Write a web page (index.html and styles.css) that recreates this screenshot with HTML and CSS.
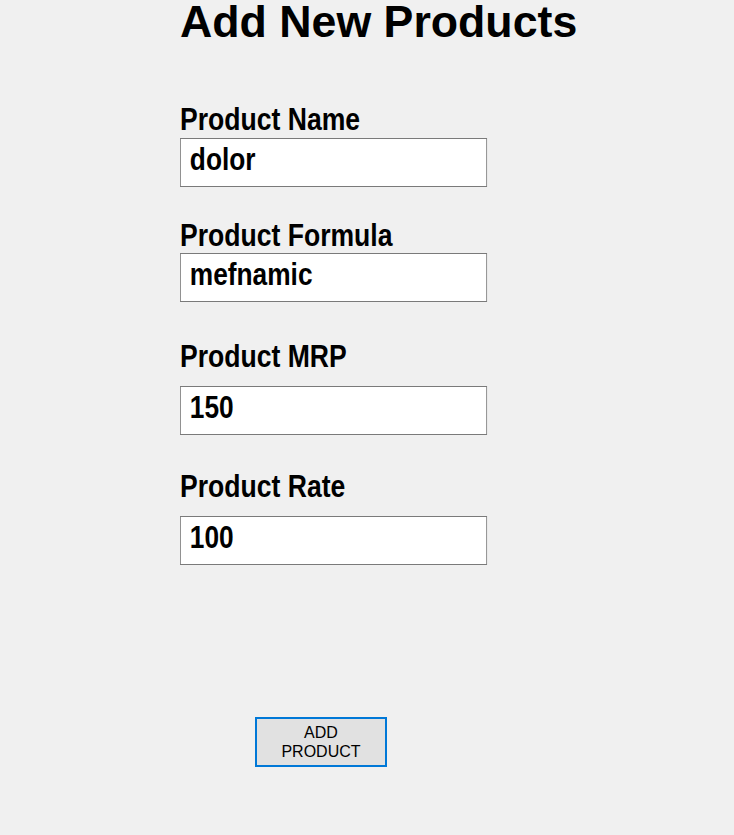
FILE: index.html
```html
<!DOCTYPE html>
<html lang="en">
<head>
<meta charset="utf-8">
<title>Add New Products</title>
<link rel="stylesheet" href="styles.css">
</head>
<body>
<main class="form-page">
  <h1 class="title">Add New Products</h1>
  <form class="product-form">
    <div class="field field-name">
      <label class="field-label" for="pname">Product Name</label>
      <input class="field-input" id="pname" type="text" value="dolor">
    </div>
    <div class="field field-formula">
      <label class="field-label" for="pformula">Product Formula</label>
      <input class="field-input" id="pformula" type="text" value="mefnamic">
    </div>
    <div class="field field-mrp">
      <label class="field-label" for="pmrp">Product MRP</label>
      <input class="field-input" id="pmrp" type="text" value="150">
    </div>
    <div class="field field-rate">
      <label class="field-label" for="prate">Product Rate</label>
      <input class="field-input" id="prate" type="text" value="100">
    </div>
    <button class="add-button" type="button">ADD<br>PRODUCT</button>
  </form>
</main>
</body>
</html>
```

FILE: styles.css
```css
html, body {
  margin: 0;
  padding: 0;
  background: #f0f0f0;
}

.form-page {
  padding-left: 180px;
  font-family: "Liberation Sans", Arial, sans-serif;
  color: #000;
}

.title {
  margin: 0;
  font-size: 44.7px;
  line-height: 44px;
  font-weight: bold;
  font-family: "Liberation Sans", Arial, sans-serif;
  white-space: nowrap;
}

.product-form {
  display: flex;
  flex-direction: column;
  align-items: flex-start;
}

.field {
  display: flex;
  flex-direction: column;
  align-items: flex-start;
}

/* Arial Narrow look: condense Liberation Sans horizontally */
.field-label {
  display: inline-block;
  font-family: "Liberation Sans", Arial, sans-serif;
  font-weight: bold;
  font-size: 32px;
  line-height: 36px;
  white-space: nowrap;
  transform: scaleX(0.83);
  transform-origin: left center;
}

.field-input {
  box-sizing: border-box;
  width: 374px;
  height: 49px;
  margin: 0;
  padding: 0 8px 7px 11px;
  border: 1px solid #7a7a7a;
  background: #fff;
  font-family: "Liberation Sans", Arial, sans-serif;
  font-weight: bold;
  font-size: 32px;
  color: #000;
  outline: none;
  transform: scaleX(0.821);
  transform-origin: left center;
}

.field-name { margin-top: 57px; }
.field-name .field-input { margin-top: 1px; }

.field-formula { margin-top: 30px; }
.field-formula .field-input { margin-top: 0; }

.field-mrp { margin-top: 36px; }
.field-mrp .field-input { margin-top: 12px; }

.field-rate { margin-top: 33px; }
.field-rate .field-input { margin-top: 12px; }

.add-button {
  box-sizing: border-box;
  width: 132px;
  height: 50px;
  margin: 152px 0 0 75px;
  padding: 0;
  border: 2px solid #0078d7;
  background: #e1e1e1;
  font-family: "Liberation Sans", Arial, sans-serif;
  font-size: 16px;
  line-height: 19px;
  color: #000;
  text-align: center;
}
```
